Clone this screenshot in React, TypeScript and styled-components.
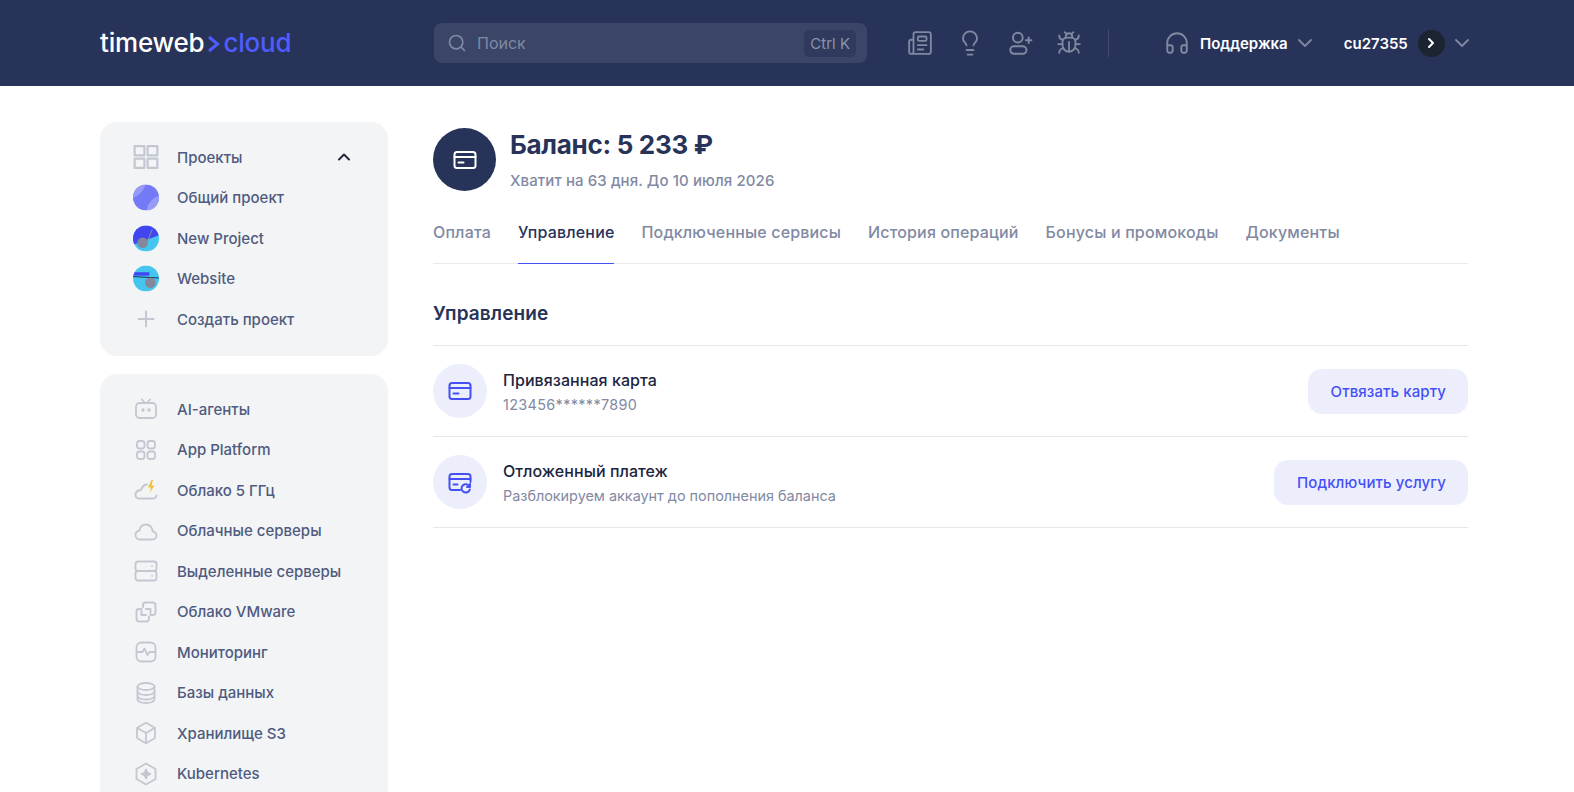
import React from "react"
import styled, { createGlobalStyle } from "styled-components"
import { Search, Newspaper, Lightbulb, Bug, Headphones, ChevronDown, ChevronUp, ChevronRight, Plus, Box } from "lucide-react"

const Global = createGlobalStyle`
  html, body { margin: 0; padding: 0; height: 792px; overflow: hidden; background: #fff; }
  body { font-family: "Inter", "Noto Sans", sans-serif; }
  * { box-sizing: border-box; }
`

const Top = styled.header`
  height: 86px;
  background: #273359;
  display: flex;
  align-items: center;
  padding-left: 100px;
`
const Logo = styled.div`
  width: 334px;
  display: flex;
  align-items: center;
  font-size: 26px;
  font-weight: 500;
  letter-spacing: -0.2px;
  margin-top: -2px;
  color: #fff;
  span { color: #4f5cff; font-weight: 500; }
  svg { margin: 3px 3px 0 3px; }
`
const SearchBox = styled.div`
  width: 433px;
  height: 40px;
  border-radius: 8px;
  background: #3a4568;
  display: flex;
  align-items: center;
  padding: 0 11px 0 13px;
  color: #7f89a3;
  font-size: 16px;
  gap: 10px;
`
const Hint = styled.span`flex: 1;`
const Kbd = styled.span`
  height: 27px;
  padding: 0 6px;
  border-radius: 5px;
  background: #2f3a5e;
  display: flex;
  align-items: center;
  font-size: 15px;
  color: #8a93ab;
`
const TopIcons = styled.div`
  display: flex;
  align-items: center;
  gap: 23px;
  margin-left: 40px;
  color: #8089a1;
`
const Divider = styled.div`
  width: 1px;
  height: 28px;
  background: #414c6d;
  margin: 0 55px 0 26px;
`
const TopLabel = styled.span<{ $ml?: number; $mr?: number }>`
  color: #fff;
  font-size: 15px;
  font-weight: 600;
  letter-spacing: 0;
  margin: 0 ${p => p.$mr ?? 0}px 0 ${p => p.$ml ?? 0}px;
`
const UserDot = styled.span`
  width: 27px;
  height: 27px;
  border-radius: 50%;
  background: #1b2430;
  color: #fff;
  display: flex;
  align-items: center;
  justify-content: center;
  margin-right: 5px;
`
const Group = styled.div<{ $mr?: number }>`
  display: flex;
  align-items: center;
  color: #8089a1;
  margin-right: ${p => p.$mr ?? 0}px;
`
const Layout = styled.div`
  display: grid;
  grid-template-columns: 288px 1035px;
  column-gap: 45px;
  padding: 36px 0 0 100px;
`
const Side = styled.aside`
  display: flex;
  flex-direction: column;
  gap: 18px;
`
const Card = styled.div`
  background: #f3f4f6;
  border-radius: 17px;
  padding: 15px 0 16px;
`
const Item = styled.div`
  height: 40.55px;
  display: flex;
  align-items: center;
  color: #4f5b80;
  font-size: 15px;
  font-weight: 500;
  padding-left: 33px;
`
const IconSlot = styled.span`
  width: 26px;
  height: 26px;
  margin-right: 18px;
  display: flex;
  align-items: center;
  justify-content: center;
  color: #c3c7d1;
  flex: none;
`
const Caret = styled.span`
  margin-left: auto;
  margin-right: 34px;
  color: #23293a;
  display: flex;
`
const Main = styled.main`
  display: flex;
  flex-direction: column;
`
const Balance = styled.div`
  display: flex;
  align-items: center;
  gap: 14px;
  margin-top: 6px;
`
const BalanceIcon = styled.div`
  width: 63px;
  height: 63px;
  border-radius: 50%;
  background: #273359;
  display: flex;
  align-items: center;
  justify-content: center;
  flex: none;
`
const Title = styled.h1`
  margin: 0;
  font-size: 26px;
  line-height: 34px;
  font-weight: 700;
  letter-spacing: -0.3px;
  color: #273359;
`
const Sub = styled.div`
  margin-top: 9px;
  font-size: 15px;
  line-height: 20px;
  font-weight: 500;
  letter-spacing: 0.1px;
  color: #8189a3;
`
const Tabs = styled.nav`
  display: flex;
  gap: 27px;
  height: 55px;
  margin-top: 18px;
  border-bottom: 1px solid #e8eaf0;
`
const Tab = styled.div<{ $on?: boolean }>`
  height: 55px;
  padding-top: 13px;
  font-size: 16px;
  font-weight: 500;
  letter-spacing: 0.16px;
  color: ${p => (p.$on ? "#273359" : "#8189a3")};
  border-bottom: 1px solid ${p => (p.$on ? "#4450f5" : "transparent")};
`
const Heading = styled.h2`
  margin: 0;
  height: 82px;
  padding-top: 38px;
  font-size: 19px;
  line-height: 24px;
  font-weight: 600;
  letter-spacing: 0.1px;
  color: #273359;
  border-bottom: 1px solid #e6e7ea;
`
const Row = styled.div`
  height: 91px;
  display: flex;
  align-items: center;
  border-bottom: 1px solid #e6e7ea;
`
const RowIcon = styled.div`
  width: 54px;
  height: 54px;
  border-radius: 50%;
  background: #eceefc;
  display: flex;
  align-items: center;
  justify-content: center;
  margin-right: 16px;
  flex: none;
`
const RowText = styled.div`
  flex: 1;
  padding-top: 2px;
`
const RowTitle = styled.div`
  font-size: 16px;
  line-height: 20px;
  font-weight: 500;
  letter-spacing: 0.06px;
  color: #1c2540;
`
const RowSub = styled.div<{ $spaced?: boolean }>`
  margin-top: 5px;
  font-size: 14.4px;
  line-height: 20px;
  letter-spacing: ${p => (p.$spaced ? "0.35px" : "0")};
  color: #8189a3;
`
const Action = styled.button`
  height: 45px;
  padding: 0 22px 0 23px;
  border: 0;
  border-radius: 14px;
  background: #eceefc;
  color: #4450f5;
  font: 500 15px "Inter", sans-serif;
  letter-spacing: 0.1px;
`

const Stroke = ({ children, size = 24, color = "currentColor", width = 1.8 }: { children: React.ReactNode; size?: number; color?: string; width?: number }) => (
  <svg width={size} height={size} viewBox="0 0 24 24" fill="none" stroke={color} strokeWidth={width} strokeLinecap="round" strokeLinejoin="round">
    {children}
  </svg>
)

const CardGlyph = ({ color, size }: { color: string; size: number }) => (
  <Stroke size={size} color={color} width={2}>
    <rect x="1.5" y="4" width="21" height="16" rx="2.5" />
    <path d="M1.5 9h21" />
    <path d="M5.5 14.5h5" />
  </Stroke>
)

const icons: Record<string, React.ReactNode> = {
  grid: (
    <Stroke size={26} width={2}>
      <rect x="1.5" y="2" width="9" height="8.5" />
      <rect x="13.5" y="2" width="9" height="8.5" />
      <rect x="1.5" y="13.5" width="9" height="8.5" />
      <rect x="13.5" y="13.5" width="9" height="8.5" />
    </Stroke>
  ),
  bot: (
    <Stroke>
      <rect x="2" y="6" width="20" height="15" rx="3.5" />
      <path d="M8 2.5 11 6M16 2.5 13 6" />
      <circle cx="9" cy="13" r=".8" fill="currentColor" />
      <circle cx="15" cy="13" r=".8" fill="currentColor" />
    </Stroke>
  ),
  apps: (
    <Stroke>
      <rect x="3" y="3" width="7.5" height="7.5" rx="2.5" />
      <rect x="13.5" y="3" width="7.5" height="7.5" rx="2.5" />
      <rect x="3" y="13.5" width="7.5" height="7.5" rx="2.5" />
      <rect x="13.5" y="13.5" width="7.5" height="7.5" rx="2.5" />
    </Stroke>
  ),
  fast: (
    <svg width="24" height="24" viewBox="0 0 24 24" fill="none">
      <path d="M13 6.500c-3 .3-5 2.300-6 5.500C3.500 12.300 1.500 14.500 1.500 17c0 2 1.500 3.500 3.500 3.500h14c2 0 3.300-1 3.500-3" stroke="#c3c7d1" strokeWidth="1.8" strokeLinecap="round" />
      <path d="M17.500 2 14 9.500h3L15.500 15l5-7.500h-3l1.500-5.500z" fill="#f5c02e" />
    </svg>
  ),
  cloud: (
    <Stroke>
      <path d="M6 20.500h12.500c2.300 0 4-1.700 4-3.900 0-2.100-1.500-3.800-3.700-4C18 8.500 15.500 5.500 12 5.500c-3.400 0-5.900 2.500-6.600 6C3.200 12 1.500 14 1.500 16.300c0 2.400 2 4.200 4.500 4.200z" />
    </Stroke>
  ),
  server: (
    <Stroke>
      <rect x="1.500" y="2.500" width="21" height="9.500" rx="2.500" />
      <rect x="1.500" y="12" width="21" height="9.500" rx="2.500" />
      <path d="M18 7.200h.1M18 16.800h.1" />
    </Stroke>
  ),
  vmware: (
    <Stroke width={1.9}>
      <path d="M9 7V5a2.500 2.500 0 0 1 2.500-2.500H19A2.500 2.500 0 0 1 21.500 5v7.500A2.500 2.500 0 0 1 19 15h-2.500" />
      <path d="M7.500 9H5a2.500 2.500 0 0 0-2.500 2.500V19A2.500 2.500 0 0 0 5 21.500h7.500A2.500 2.500 0 0 0 15 19v-2.500" />
      <path d="M12 9h4.500v4M12 15H7.500v-4" />
    </Stroke>
  ),
  monitor: (
    <Stroke>
      <rect x="2.500" y="2.500" width="19" height="19" rx="5" />
      <path d="M3 12h5.500l2-3.500 3 6.500 2-3h5.500" />
    </Stroke>
  ),
  db: (
    <Stroke>
      <ellipse cx="12" cy="5.500" rx="8.500" ry="3.500" />
      <path d="M3.500 5.500v13c0 2 3.800 3.500 8.500 3.500s8.500-1.500 8.500-3.500v-13" />
      <path d="M3.500 10.500c0 2 3.800 3.500 8.500 3.500s8.500-1.500 8.500-3.500M3.500 15c0 2 3.800 3.500 8.500 3.500s8.500-1.500 8.500-3.500" />
    </Stroke>
  ),
  box: <Box size={24} strokeWidth={1.8} />,
  k8s: (
    <Stroke>
      <path d="M12 1.500 21.500 7v10L12 22.500 2.500 17V7z" />
      <path d="M12 7.500l1.300 3.200 3.200 1.300-3.200 1.300-1.300 3.200-1.300-3.200L7.500 12l3.200-1.300z" fill="currentColor" />
    </Stroke>
  ),
}

const AvatarOne = () => (
  <svg width="27" height="27" viewBox="0 0 27 27">
    <clipPath id="a1"><circle cx="13.500" cy="13.500" r="13.500" /></clipPath>
    <g clipPath="url(#a1)">
      <rect width="27" height="27" fill="#7479f6" />
      <path d="M0 0h13C11 6 7 11 0 14z" fill="#979bf8" />
      <path d="M27 12C20 14 15 20 14 27h13z" fill="#979bf8" />
    </g>
  </svg>
)
const AvatarTwo = () => (
  <svg width="27" height="27" viewBox="0 0 27 27">
    <clipPath id="a2"><circle cx="13.500" cy="13.500" r="13.500" /></clipPath>
    <g clipPath="url(#a2)">
      <rect width="27" height="27" fill="#44c6ef" />
      <path d="M0 0h27v10L0 20z" fill="#4146f0" />
      <path d="M14 19 20 4" stroke="#8c8fa8" strokeWidth="1" />
      <circle cx="10" cy="18" r="5.500" fill="#85879d" />
    </g>
  </svg>
)
const AvatarThree = () => (
  <svg width="27" height="27" viewBox="0 0 27 27">
    <clipPath id="a3"><circle cx="13.500" cy="13.500" r="13.500" /></clipPath>
    <g clipPath="url(#a3)">
      <rect width="27" height="27" fill="#44c6ef" />
      <rect x="0" y="7" width="17" height="3.500" fill="#4146f0" />
      <path d="M0 11.500 27 13" stroke="#1d2a55" strokeWidth="1" />
      <circle cx="18" cy="18" r="5.500" fill="#85879d" />
    </g>
  </svg>
)

const services: [string, string][] = [
  ["bot", "AI-агенты"],
  ["apps", "App Platform"],
  ["fast", "Облако 5 ГГц"],
  ["cloud", "Облачные серверы"],
  ["server", "Выделенные серверы"],
  ["vmware", "Облако VMware"],
  ["monitor", "Мониторинг"],
  ["db", "Базы данных"],
  ["box", "Хранилище S3"],
  ["k8s", "Kubernetes"],
]

const tabs = ["Оплата", "Управление", "Подключенные сервисы", "История операций", "Бонусы и промокоды", "Документы"]

export default function App() {
  return (
    <>
      <Global />
      <Top>
        <Logo>
          timeweb
          <svg width="13" height="18" viewBox="0 0 13 18" fill="none">
            <path d="M2 2l8.500 7L2 16" stroke="#4f5cff" strokeWidth="3" />
          </svg>
          <span>cloud</span>
        </Logo>
        <SearchBox>
          <Search size={20} strokeWidth={2} />
          <Hint>Поиск</Hint>
          <Kbd>Ctrl K</Kbd>
        </SearchBox>
        <TopIcons>
          <Newspaper size={26} strokeWidth={1.7} />
          <Lightbulb size={28} strokeWidth={1.6} />
          <Stroke size={26}>
            <circle cx="10" cy="7" r="4.500" />
            <rect x="3" y="15" width="15" height="7" rx="3.500" />
            <path d="M20 7v5M17.500 9.500h5" />
          </Stroke>
          <Bug size={26} strokeWidth={1.7} />
        </TopIcons>
        <Divider />
        <Group $mr={27}>
          <Headphones size={26} strokeWidth={1.8} />
          <TopLabel $ml={10} $mr={5}>Поддержка</TopLabel>
          <ChevronDown size={24} strokeWidth={1.8} />
        </Group>
        <Group>
          <TopLabel $mr={10}>cu27355</TopLabel>
          <UserDot><ChevronRight size={16} strokeWidth={3} /></UserDot>
          <ChevronDown size={24} strokeWidth={1.8} />
        </Group>
      </Top>
      <Layout>
        <Side>
          <Card>
            <Item>
              <IconSlot>{icons.grid}</IconSlot>Проекты
              <Caret><ChevronUp size={20} strokeWidth={2.4} /></Caret>
            </Item>
            <Item><IconSlot><AvatarOne /></IconSlot>Общий проект</Item>
            <Item><IconSlot><AvatarTwo /></IconSlot>New Project</Item>
            <Item><IconSlot><AvatarThree /></IconSlot>Website</Item>
            <Item><IconSlot><Plus size={26} strokeWidth={1.8} /></IconSlot>Создать проект</Item>
          </Card>
          <Card>
            {services.map(([icon, label]) => (
              <Item key={label}><IconSlot>{icons[icon]}</IconSlot>{label}</Item>
            ))}
          </Card>
        </Side>
        <Main>
          <Balance>
            <BalanceIcon><CardGlyph color="#fff" size={24} /></BalanceIcon>
            <div>
              <Title>Баланс: 5 233 ₽</Title>
              <Sub>Хватит на 63 дня. До 10 июля 2026</Sub>
            </div>
          </Balance>
          <Tabs>
            {tabs.map(t => <Tab key={t} $on={t === "Управление"}>{t}</Tab>)}
          </Tabs>
          <Heading>Управление</Heading>
          <Row>
            <RowIcon><CardGlyph color="#4450f5" size={24} /></RowIcon>
            <RowText>
              <RowTitle>Привязанная карта</RowTitle>
              <RowSub $spaced>123456******7890</RowSub>
            </RowText>
            <Action>Отвязать карту</Action>
          </Row>
          <Row>
            <RowIcon>
              <Stroke color="#4450f5" width={2}>
                <path d="M12 20H4a2.500 2.500 0 0 1-2.500-2.500v-11A2.500 2.500 0 0 1 4 4h16a2.500 2.500 0 0 1 2.500 2.500V12" />
                <path d="M1.500 9h21M5.500 14.500h4" />
                <path d="M21.500 16.500a4.200 4.200 0 1 0 .3 3" />
                <path d="M22 14v3h-3" />
              </Stroke>
            </RowIcon>
            <RowText>
              <RowTitle>Отложенный платеж</RowTitle>
              <RowSub>Разблокируем аккаунт до пополнения баланса</RowSub>
            </RowText>
            <Action>Подключить услугу</Action>
          </Row>
        </Main>
      </Layout>
    </>
  )
}
